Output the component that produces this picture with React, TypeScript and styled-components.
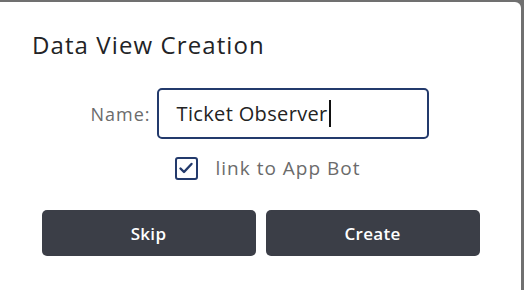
import React from "react";
import styled, { createGlobalStyle } from "styled-components";

const GlobalStyle = createGlobalStyle`
  html, body {
    margin: 0;
    padding: 0;
    background: #707070;
    font-family: "Open Sans", Lato, sans-serif;
  }
`;

const Page = styled.div`
  width: 524px;
  height: 290px;
  padding-top: 2px;
  box-sizing: border-box;
  overflow: hidden;
`;

const Modal = styled.div`
  width: 521px;
  height: 288px;
  background: #ffffff;
  border-top-right-radius: 6px;
  display: flex;
  flex-direction: column;
  box-sizing: border-box;
  padding-top: 27px;
`;

const Title = styled.h2`
  margin: 0;
  padding-left: 32px;
  font-size: 24px;
  line-height: 31px;
  font-weight: 400;
  letter-spacing: 1.1px;
  color: #222326;
`;

const NameRow = styled.div`
  display: flex;
  align-items: center;
  justify-content: center;
  gap: 6px;
  margin-top: 28px;
  padding-right: 2px;
`;

const Label = styled.label`
  font-size: 18px;
  letter-spacing: 1px;
  color: #6b6b6b;
`;

const Field = styled.div`
  width: 272px;
  height: 51px;
  box-sizing: border-box;
  border: 2px solid #233a6c;
  border-radius: 5px;
  padding-left: 18px;
  display: flex;
  align-items: center;
  font-size: 20px;
  letter-spacing: 0.35px;
  color: #232323;
`;

const Caret = styled.span`
  display: inline-block;
  width: 2px;
  height: 27px;
  background: #111;
  margin-left: 1px;
`;

const CheckRow = styled.div`
  display: flex;
  align-items: center;
  justify-content: center;
  gap: 18px;
  margin-top: 16px;
  padding-left: 14px;
`;

const Box = styled.span`
  width: 23px;
  height: 23px;
  box-sizing: border-box;
  border: 2.5px solid #233a6c;
  border-radius: 3px;
  display: flex;
  align-items: center;
  justify-content: center;
`;

const CheckLabel = styled.span`
  font-size: 19px;
  letter-spacing: 1px;
  color: #6b6b6b;
`;

const Buttons = styled.div`
  display: flex;
  justify-content: center;
  gap: 10px;
  margin-top: 29px;
`;

const Button = styled.button`
  width: 214px;
  height: 46px;
  border: none;
  border-radius: 5px;
  background: #3b3e47;
  color: #ffffff;
  font-family: inherit;
  font-size: 17px;
  font-weight: 600;
  letter-spacing: 0.3px;
  cursor: pointer;
`;

export default function App() {
  return (
    <Page>
      <GlobalStyle />
      <Modal>
        <Title>Data View Creation</Title>
        <NameRow>
          <Label>Name:</Label>
          <Field>
            Ticket Observer
            <Caret />
          </Field>
        </NameRow>
        <CheckRow>
          <Box>
            <svg width="16" height="16" viewBox="0 0 16 16">
              <path
                d="M2.5 8.5 L6 12 L13.5 4"
                fill="none"
                stroke="#233a6c"
                strokeWidth="2.4"
                strokeLinecap="round"
                strokeLinejoin="round"
              />
            </svg>
          </Box>
          <CheckLabel>link to App Bot</CheckLabel>
        </CheckRow>
        <Buttons>
          <Button>Skip</Button>
          <Button>Create</Button>
        </Buttons>
      </Modal>
    </Page>
  );
}
